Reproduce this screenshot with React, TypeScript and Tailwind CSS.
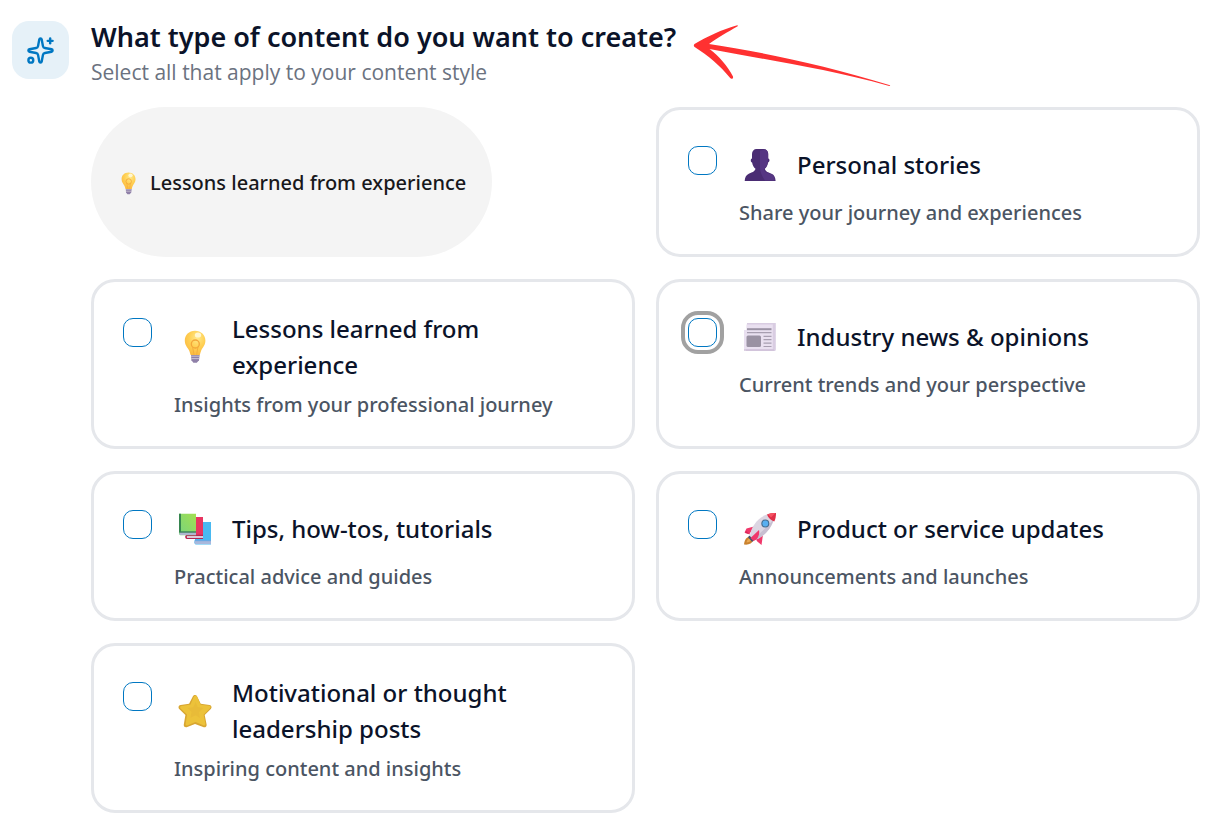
import { useId, type ReactNode } from "react";
import { Sparkles } from "lucide-react";

function BulbIcon({ className }: { className: string }) {
  const id = useId();
  return (
    <svg viewBox="0 0 34 34" className={className} aria-hidden="true">
      <defs>
        <radialGradient id={id} cx="0.6" cy="0.3" r="0.75">
          <stop offset="0" stopColor="#ffe98a" />
          <stop offset="0.5" stopColor="#ffd054" />
          <stop offset="1" stopColor="#fbb83e" />
        </radialGradient>
      </defs>
      <path d="M13 25h8.6l-.6 5.2-2.2 2.6h-3.4l-2-2.6z" fill="#8f80a8" />
      <path d="M13 26.2h8.4M13.2 28.6h8" stroke="#c9c3d3" strokeWidth="1" />
      <path d="M17 .8C11 .8 6.8 5 6.8 10.6c0 4.400 2.400 6.600 4.200 9.600.9 1.600 1 3.200 1.600 4.800h9.200c.5-1.600.7-3.200 1.500-4.800 1.700-3 4.100-5.200 4.100-9.600C27.400 5 23 .8 17 .8z" fill={`url(#${id})`} />
      <circle cx="17.300" cy="14" r="4" fill="none" stroke="#f3a63a" strokeWidth="1.300" />
      <path d="M14.500 16.500l1.500 8.200M20 16.500l-1.400 8.200" stroke="#f5ae3e" strokeWidth="1" />
      <ellipse cx="20" cy="5" rx="3.200" ry="2.600" fill="#fff6cf" />
    </svg>
  );
}

function PersonIcon({ className }: { className: string }) {
  return (
    <svg viewBox="0 0 34 34" className={className} aria-hidden="true">
      <path d="M9 6C9 3 11 1 13.500 1h7c3 0 4.800 2 4.800 5v4.500c1.500 0 1.700 3.500-.2 4-.4 3-1.700 5-3.300 6.300.7 3 3.600 3.700 6.700 4.900 2.800 1.100 3.900 3.600 4.100 7.300H1.700c.2-3.600 1.300-6.100 4.100-7.300 3-1.200 6-1.900 6.700-4.900-1.600-1.300-3-3.300-3.400-6.300-1.900-.5-1.600-4-.1-4z" fill="#4a2c73" />
      <path d="M17 2.500l5-1c2 .7 3 2.500 3 4.500v4.500c-.2 6.500-1.700 8.900-4.200 10.700.9 3.500 4.300 3.700 7.400 4.900 2.500 1.100 3.300 3.500 3.400 6.400H22c-2-3-4.500-7-5-12z" fill="#563683" />
    </svg>
  );
}

function NewsIcon({ className }: { className: string }) {
  return (
    <svg viewBox="0 0 34 34" className={className} aria-hidden="true">
      <path d="M4 3h28.800v26.500c0 1-.7 1.500-1.600 1.500H3z" fill="#d9cde2" />
      <path d="M3.500 4.500h26.300v25H1V10h2.500z" fill="#e9e0f0" />
      <path d="M1 30h30" stroke="#cfc0d9" strokeWidth="1.500" />
      <path d="M4 9.200h24.500" stroke="#9b93a5" strokeWidth="2" />
      <path d="M4 12.600h24.500M20.500 16.300h8M20.500 19.700h8M20.500 23.100h8M20.500 26.500h8" stroke="#a79eb0" strokeWidth="1.200" />
      <rect x="3.500" y="15.500" width="14.500" height="11.500" rx="1.500" fill="#9a92a3" />
    </svg>
  );
}

function BooksIcon({ className }: { className: string }) {
  const id = useId();
  return (
    <svg viewBox="0 0 34 34" className={className} aria-hidden="true">
      <defs>
        <linearGradient id={id} x1="1" y1="0" x2="0" y2="1">
          <stop offset="0" stopColor="#a2df50" />
          <stop offset="1" stopColor="#78d47e" />
        </linearGradient>
      </defs>
      <path d="M17 10h16v22.500H17.500c-1.500-1-1.500-3-.5-4z" fill="#49b9f1" />
      <path d="M17 29h16v3H18c-1.500 0-2-2-1-3z" fill="#a9b8dc" />
      <path d="M16.500 28.700H33" stroke="#6fa6e0" strokeWidth="1" />
      <path d="M8 5h17v21.500H9c-1.500-.5-1.500-2.500-1-3.500z" fill="#e83560" />
      <path d="M9 23.500h16v2.500H9z" fill="#dcc9d9" />
      <path d="M25 23.300H8.500c-1 1-1 2.900.5 3.200h16" fill="none" stroke="#b42553" strokeWidth="1.200" />
      <path d="M1 1.800h17v21.500H2.500C.5 22.500 1 20 1 20z" fill={`url(#${id})`} />
      <path d="M1 1.800h2v17.700L1 21z" fill="#36854f" />
      <path d="M2.500 20.300H18v2.800H2.500c-1.300 0-1.300-2.500 0-2.800z" fill="#aeb6d0" />
      <path d="M2 20H18" stroke="#36765b" strokeWidth="1.300" />
    </svg>
  );
}

function RocketIcon({ className }: { className: string }) {
  return (
    <svg viewBox="0 0 34 34" className={className} aria-hidden="true">
      <path d="M7 24.500c-3.500.5-5.500 3-6 8 4.500.6 8-.8 9.500-4.500z" fill="#c9822e" />
      <path d="M7 26c-2 .8-3.200 2.300-3.500 4.500 2.500 0 4-1 5-3z" fill="#e9a851" />
      <path d="M11 14.500L3.500 16.500 1.500 20.500l5 1.500zM20 22.500L18.500 33l-4.200-3.500-1.300-2z" fill="#f0386b" />
      <path d="M7 24C8 14.500 15 5.500 25 2l6.500-.7-.7 7C27.500 18 20 25.500 10.500 28.500z" fill="#dcd5e2" />
      <path d="M9.500 27C18 21 25.500 13.500 30.800 7 27.800 18 20 25.500 10.500 28.500z" fill="#c8bfd1" />
      <path d="M24 2.500c3-1.300 6.500-1.600 9-1.500.1 2.600-.4 6-1.700 8.500-3-.8-6-3.500-7.300-7z" fill="#df2f48" />
      <path d="M25 2.300c2.500-1 5-1.300 7.500-1.200L28 5.500z" fill="#f65262" />
      <path d="M6.500 23.500l4.500 5.300-2 1-4-4.500z" fill="#42506e" />
      <path d="M7.500 26l8.500-8c.8 3-.2 6.500-2.500 9.500l-3 1.500z" fill="#f0386b" />
      <path d="M3 19l4 3.500L2 21z" fill="#d92358" />
      <circle cx="22.300" cy="11.500" r="4" fill="#466d91" />
      <circle cx="22.300" cy="11.500" r="2.900" fill="#59aff1" />
    </svg>
  );
}

function StarIcon({ className }: { className: string }) {
  return (
    <svg viewBox="0 0 34 34" className={className} aria-hidden="true">
      <path d="M14.800 2.500c.8-2 3.500-2 4.400 0l3.500 7.300 8.800 1.200c2 .3 2.700 2.500 1.300 3.900l-6.100 6.200 1.900 9.400c.3 2.200-1.600 3.400-3.500 2.500L17 30 9.300 33c-2 1-3.800-.4-3.500-2.400l1.600-9.500L1.200 15c-1.300-1.500-.7-3.600 1.400-3.900l8.500-1.300z" fill="#d8a632" />
      <path d="M15.800 2.800c.8-1.600 2.500-1.600 3.200 0l3.700 8 8.500 1c1.400.2 1.900 1.500.9 2.500l-6.500 6.500 1.800 8.900c.2 1.500-1 2.200-2.300 1.500L17.500 28l-7.700 3.200c-1.300.6-2.400-.2-2.200-1.500l1.500-9-6.500-6.300c-.9-1-.4-2.200.9-2.400l9-1.500z" fill="#ecc23a" />
      <path d="M17.600 8l2 5 5.700 1-4.300 4.200.9 5.700-4.400-2.700-5 2.500 1.100-5.700-4.100-4 5.800-.8z" fill="#e8bb38" />
    </svg>
  );
}

type ContentType = {
  id: string;
  title: string;
  description: string;
  icon: ReactNode;
  focused?: boolean;
};

const iconClass = "size-[34px]";

const contentTypes: ContentType[] = [
  { id: "stories", title: "Personal stories", description: "Share your journey and experiences", icon: <PersonIcon className={iconClass} /> },
  { id: "lessons", title: "Lessons learned from experience", description: "Insights from your professional journey", icon: <BulbIcon className={iconClass} /> },
  { id: "news", title: "Industry news & opinions", description: "Current trends and your perspective", icon: <NewsIcon className={iconClass} />, focused: true },
  { id: "tips", title: "Tips, how-tos, tutorials", description: "Practical advice and guides", icon: <BooksIcon className={iconClass} /> },
  { id: "updates", title: "Product or service updates", description: "Announcements and launches", icon: <RocketIcon className={iconClass} /> },
  { id: "motivation", title: "Motivational or thought leadership posts", description: "Inspiring content and insights", icon: <StarIcon className={iconClass} /> },
];

function OptionCard({ option }: { option: ContentType }) {
  return (
    <label
      htmlFor={option.id}
      className="flex items-start gap-[22px] rounded-3xl border-[3px] border-[#e5e7eb] px-[29px] pt-[29px] pb-[25px]"
    >
      <input
        id={option.id}
        type="checkbox"
        className={
          option.focused
            ? "mt-[7px] size-[29px] shrink-0 appearance-none rounded-[10px] border border-[#0077c2] checked:bg-[#0077c2] outline-4 outline-offset-3 outline-[#a1a1a1]"
            : "mt-[7px] size-[29px] shrink-0 appearance-none rounded-[10px] border border-[#0077c2] checked:bg-[#0077c2]"
        }
      />
      <span className="flex min-w-0 flex-1 flex-col gap-[5px]">
        <span className="flex min-h-[52px] items-center gap-4">
          <span className="flex w-[42px] shrink-0 justify-center">{option.icon}</span>
          <span className="text-[24px] leading-[36px] font-medium text-[#0b1329]">{option.title}</span>
        </span>
        <span className="text-[20px] leading-[33px] font-medium text-[#4b5563]">{option.description}</span>
      </span>
    </label>
  );
}

function Arrow() {
  return (
    <svg
      viewBox="0 0 204 70"
      className="pointer-events-none absolute top-5 left-[690px] w-[204px]"
      fill="#ff3131"
      aria-hidden="true"
    >
      <path d="M4.500 24C17 16.500 32 9.500 47.200 5.200c1 0 .8.900 0 1.200C38 12 27 17.500 19 24 66 31 132 44 200 65.200c.5.500 0 .8-.8.700C132 47.500 74 39.500 19.500 29 29 36 37.500 46 43 56.500c.6 1.800-1.500 3.200-2.800 1.500C30 45.500 18 35.500 5 27.300c-1.500-1-1.500-2.500-.5-3.300z" />
    </svg>
  );
}

export default function App() {
  return (
    <main className="relative min-h-screen bg-white pt-[21px] pr-[22px] pb-[18px] pl-3 font-['Noto_Sans','Open_Sans',sans-serif]">
      <section className="flex items-start gap-[22px]">
        <div className="flex h-[58px] w-[57px] shrink-0 items-center justify-center rounded-[17px] bg-[#e6f1f8]">
          <Sparkles size={29} className="text-[#0077c2]" aria-hidden="true" />
        </div>
        <div className="min-w-0 flex-1">
          <header>
            <h1 className="text-[27px] leading-8 font-semibold text-[#0b1329]">
              What type of content do you want to create?
            </h1>
            <p className="mt-[3px] font-['Open_Sans','Noto_Sans',sans-serif] text-[21px] leading-8 text-[#6b7280]">
              Select all that apply to your content style
            </p>
          </header>
          <div className="mt-[19px] grid grid-cols-2 gap-x-[21px] gap-y-[22px]">
            <button
              type="button"
              className="flex items-center gap-[10px] justify-self-start rounded-[75px] bg-[#f4f4f4] px-[26px] pt-[2px] text-[20px] font-medium text-[#18181b]"
            >
              <BulbIcon className="size-[23px]" />
              Lessons learned from experience
            </button>
            {contentTypes.map((option) => (
              <OptionCard key={option.id} option={option} />
            ))}
          </div>
        </div>
      </section>
      <Arrow />
    </main>
  );
}
